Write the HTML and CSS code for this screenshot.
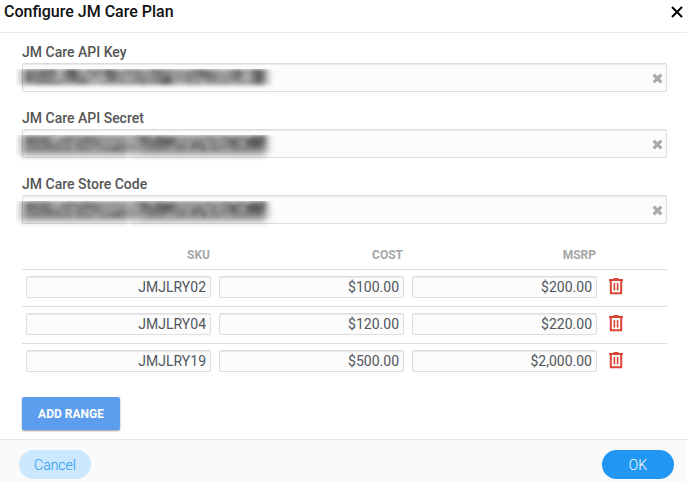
FILE: index.html
```html
<!DOCTYPE html>
<html lang="en">
<head>
    <meta charset="UTF-8">
    <meta name="viewport" content="width=device-width, initial-scale=1.0">
    <title>Configure JM Care Plan</title>
    <link rel="stylesheet" href="styles.css">
</head>
<body>

<!-- Trash icon shared by the table rows -->
<svg class="sprite" aria-hidden="true">
    <symbol id="trash" viewBox="0 0 14 17">
        <path d="M0 2h14M4.5 1h5" fill="none" stroke="currentColor" stroke-width="2"/>
        <path d="M1.8 2v13.2h10.4V2" fill="none" stroke="currentColor" stroke-width="2"/>
        <path d="M5.4 5v7.5M8.6 5v7.5" fill="none" stroke="currentColor" stroke-width="1.6"/>
    </symbol>
    <symbol id="clear" viewBox="0 0 10 10">
        <path d="M1.5 1.5l7 7M8.5 1.5l-7 7" fill="none" stroke="currentColor" stroke-width="3"/>
    </symbol>
</svg>

<header>
    <h1>Configure JM Care Plan</h1>
    <button class="close" type="button" aria-label="Close">
        <svg width="12" height="12" viewBox="0 0 12 12"><path d="M1 1l10 10M11 1L1 11" fill="none" stroke="#000" stroke-width="2"/></svg>
    </button>
</header>

<form class="container">
    <div class="field">
        <label for="apiKey">JM Care API Key</label>
        <div class="input-box">
            <input type="text" id="apiKey">
            <svg class="mask" data-mask="key"></svg>
            <button class="clear" type="button" aria-label="Clear"><svg width="11" height="11"><use href="#clear"/></svg></button>
        </div>
    </div>
    <div class="field">
        <label for="apiSecret">JM Care API Secret</label>
        <div class="input-box">
            <input type="text" id="apiSecret">
            <svg class="mask" data-mask="secret"></svg>
            <button class="clear" type="button" aria-label="Clear"><svg width="11" height="11"><use href="#clear"/></svg></button>
        </div>
    </div>
    <div class="field">
        <label for="storeCode">JM Care Store Code</label>
        <div class="input-box">
            <input type="text" id="storeCode">
            <svg class="mask" data-mask="secret"></svg>
            <button class="clear" type="button" aria-label="Clear"><svg width="11" height="11"><use href="#clear"/></svg></button>
        </div>
    </div>

    <table>
        <thead>
            <tr><th>SKU</th><th>COST</th><th>MSRP</th><td class="action"></td></tr>
        </thead>
        <tbody>
            <tr>
                <td><input type="text" aria-label="SKU" value="JMJLRY02"></td>
                <td><input type="text" aria-label="Cost" value="$100.00"></td>
                <td><input type="text" aria-label="MSRP" value="$200.00"></td>
                <td class="action"><button class="delete" type="button" aria-label="Delete"><svg width="14" height="17"><use href="#trash"/></svg></button></td>
            </tr>
            <tr>
                <td><input type="text" aria-label="SKU" value="JMJLRY04"></td>
                <td><input type="text" aria-label="Cost" value="$120.00"></td>
                <td><input type="text" aria-label="MSRP" value="$220.00"></td>
                <td class="action"><button class="delete" type="button" aria-label="Delete"><svg width="14" height="17"><use href="#trash"/></svg></button></td>
            </tr>
            <tr>
                <td><input type="text" aria-label="SKU" value="JMJLRY19"></td>
                <td><input type="text" aria-label="Cost" value="$500.00"></td>
                <td><input type="text" aria-label="MSRP" value="$2,000.00"></td>
                <td class="action"><button class="delete" type="button" aria-label="Delete"><svg width="14" height="17"><use href="#trash"/></svg></button></td>
            </tr>
        </tbody>
    </table>

    <button class="add" type="button">ADD RANGE</button>
</form>

<footer>
    <button class="cancel" type="button">Cancel</button>
    <button class="ok" type="button">OK</button>
</footer>

<script src="mask.js"></script>
</body>
</html>
```
FILE: mask.js
```js
// Mosaic over the private values, one digit per cell: 0 is clear, 9 is darkest
const masks = {
    key: [
        '1466677745886466668755666557766555567765545675578620',
        '1476676645786546557765556555666555666776555675468620',
        '1476666545676654446755456656678555655566555664468620',
        '1455666665556654455555555655677544555455555455567520'
    ],
    secret: [
        '1466666545665666555555456765766655555565566566577720',
        '1477676456656676655555445776788755556556556865888720',
        '1466667665656656655566555667777666577656566765788620',
        '1466666666656665566776555566665566565756655666666520',
        '1344444444444444444444333444444444444444444444444310',
        '0111111111111111111111011111111111111111111111111100'
    ]
};

document.querySelectorAll('.mask').forEach(function (svg) {
    masks[svg.dataset.mask].forEach(function (row, y) {
        for (let x = 0; x < row.length; x++) {
            const cell = document.createElementNS('http://www.w3.org/2000/svg', 'rect');
            cell.setAttribute('x', x * 5);
            cell.setAttribute('y', y * 4);
            cell.setAttribute('width', 5);
            cell.setAttribute('height', 4);
            cell.setAttribute('fill-opacity', row[x] * 0.08);
            svg.appendChild(cell);
        }
    });
});
```
FILE: styles.css
```css
* {
    box-sizing: border-box;
}
body {
    font-family: Roboto, sans-serif;
    margin: 0;
    min-height: 100vh;
    display: flex;
    flex-direction: column;
    background-color: white;
    color: #555;
}
button {
    font-family: inherit;
    border: none;
    padding: 0;
    background: none;
    cursor: pointer;
}
svg {
    display: block;
}
.sprite {
    position: absolute;
    width: 0;
    height: 0;
}
header {
    display: flex;
    justify-content: space-between;
    align-items: center;
    height: 33px;
    padding: 0 4px 9px;
    border-bottom: 1px solid #eaeaea;
}
h1 {
    margin: 0;
    font-size: 16px;
    line-height: 22px;
    font-weight: 500;
    color: #111;
}
.container {
    padding: 10px 20px 9px 22px;
}
.field {
    margin-bottom: 17px;
}
.field label {
    display: block;
    margin-bottom: 2px;
    font-size: 14px;
    line-height: 18px;
    font-weight: 500;
}
.input-box {
    position: relative;
}
input {
    display: block;
    width: 100%;
    font-family: inherit;
    font-size: 14px;
    color: #50565c;
    background-color: #fcfcfc;
    border: 1px solid #ddd;
    border-radius: 2px;
    box-shadow: inset 0 1px 1px rgba(0, 0, 0, 0.08);
}
.input-box input {
    height: 29px;
    padding: 0 24px 0 6px;
}
/* the blur blends the cells, the clip keeps the top edge sharp */
.mask {
    position: absolute;
    left: -6px;
    top: 6px;
    width: 262px;
    height: 26px;
    filter: blur(2px);
    clip-path: inset(0);
    pointer-events: none;
}
.clear {
    position: absolute;
    right: 4px;
    top: 10px;
    color: #aaa;
}
table {
    width: 100%;
    table-layout: fixed;
    border-collapse: collapse;
}
th {
    height: 28px;
    padding: 0 5px;
    font-size: 12px;
    font-weight: 700;
    text-align: right;
    color: #a6a6a6;
}
td {
    height: 37px;
    padding: 6px 4px 8px;
    border-top: 1px solid #ddd;
    vertical-align: top;
}
thead td {
    height: 28px;
    padding: 0;
    border: none;
}
td input {
    height: 22px;
    padding: 0 4px;
    text-align: right;
}
.action {
    width: 66px;
    padding: 8px;
}
.delete {
    display: block;
    color: #db4437;
}
.add {
    display: block;
    margin-top: 17px;
    min-width: 98px;
    height: 33px;
    padding: 0 14px;
    font-size: 12px;
    font-weight: 700;
    color: white;
    background-color: #5c9ded;
    border-radius: 2px;
    box-shadow: 0 1px 2px rgba(0, 0, 0, 0.4);
}
footer {
    flex: 1;
    display: flex;
    justify-content: space-between;
    align-items: flex-start;
    padding: 10px 13px 2px 19px;
    background-color: #fafafa;
    border-top: 1px solid #e6e6e6;
}
footer button {
    width: 72px;
    height: 29px;
    border-radius: 15px;
    font-size: 14px;
    font-weight: 300;
}
.cancel {
    background-color: #cce8ff;
    color: #2196f3;
}
.ok {
    background-color: #2196f3;
    color: white;
}
```
